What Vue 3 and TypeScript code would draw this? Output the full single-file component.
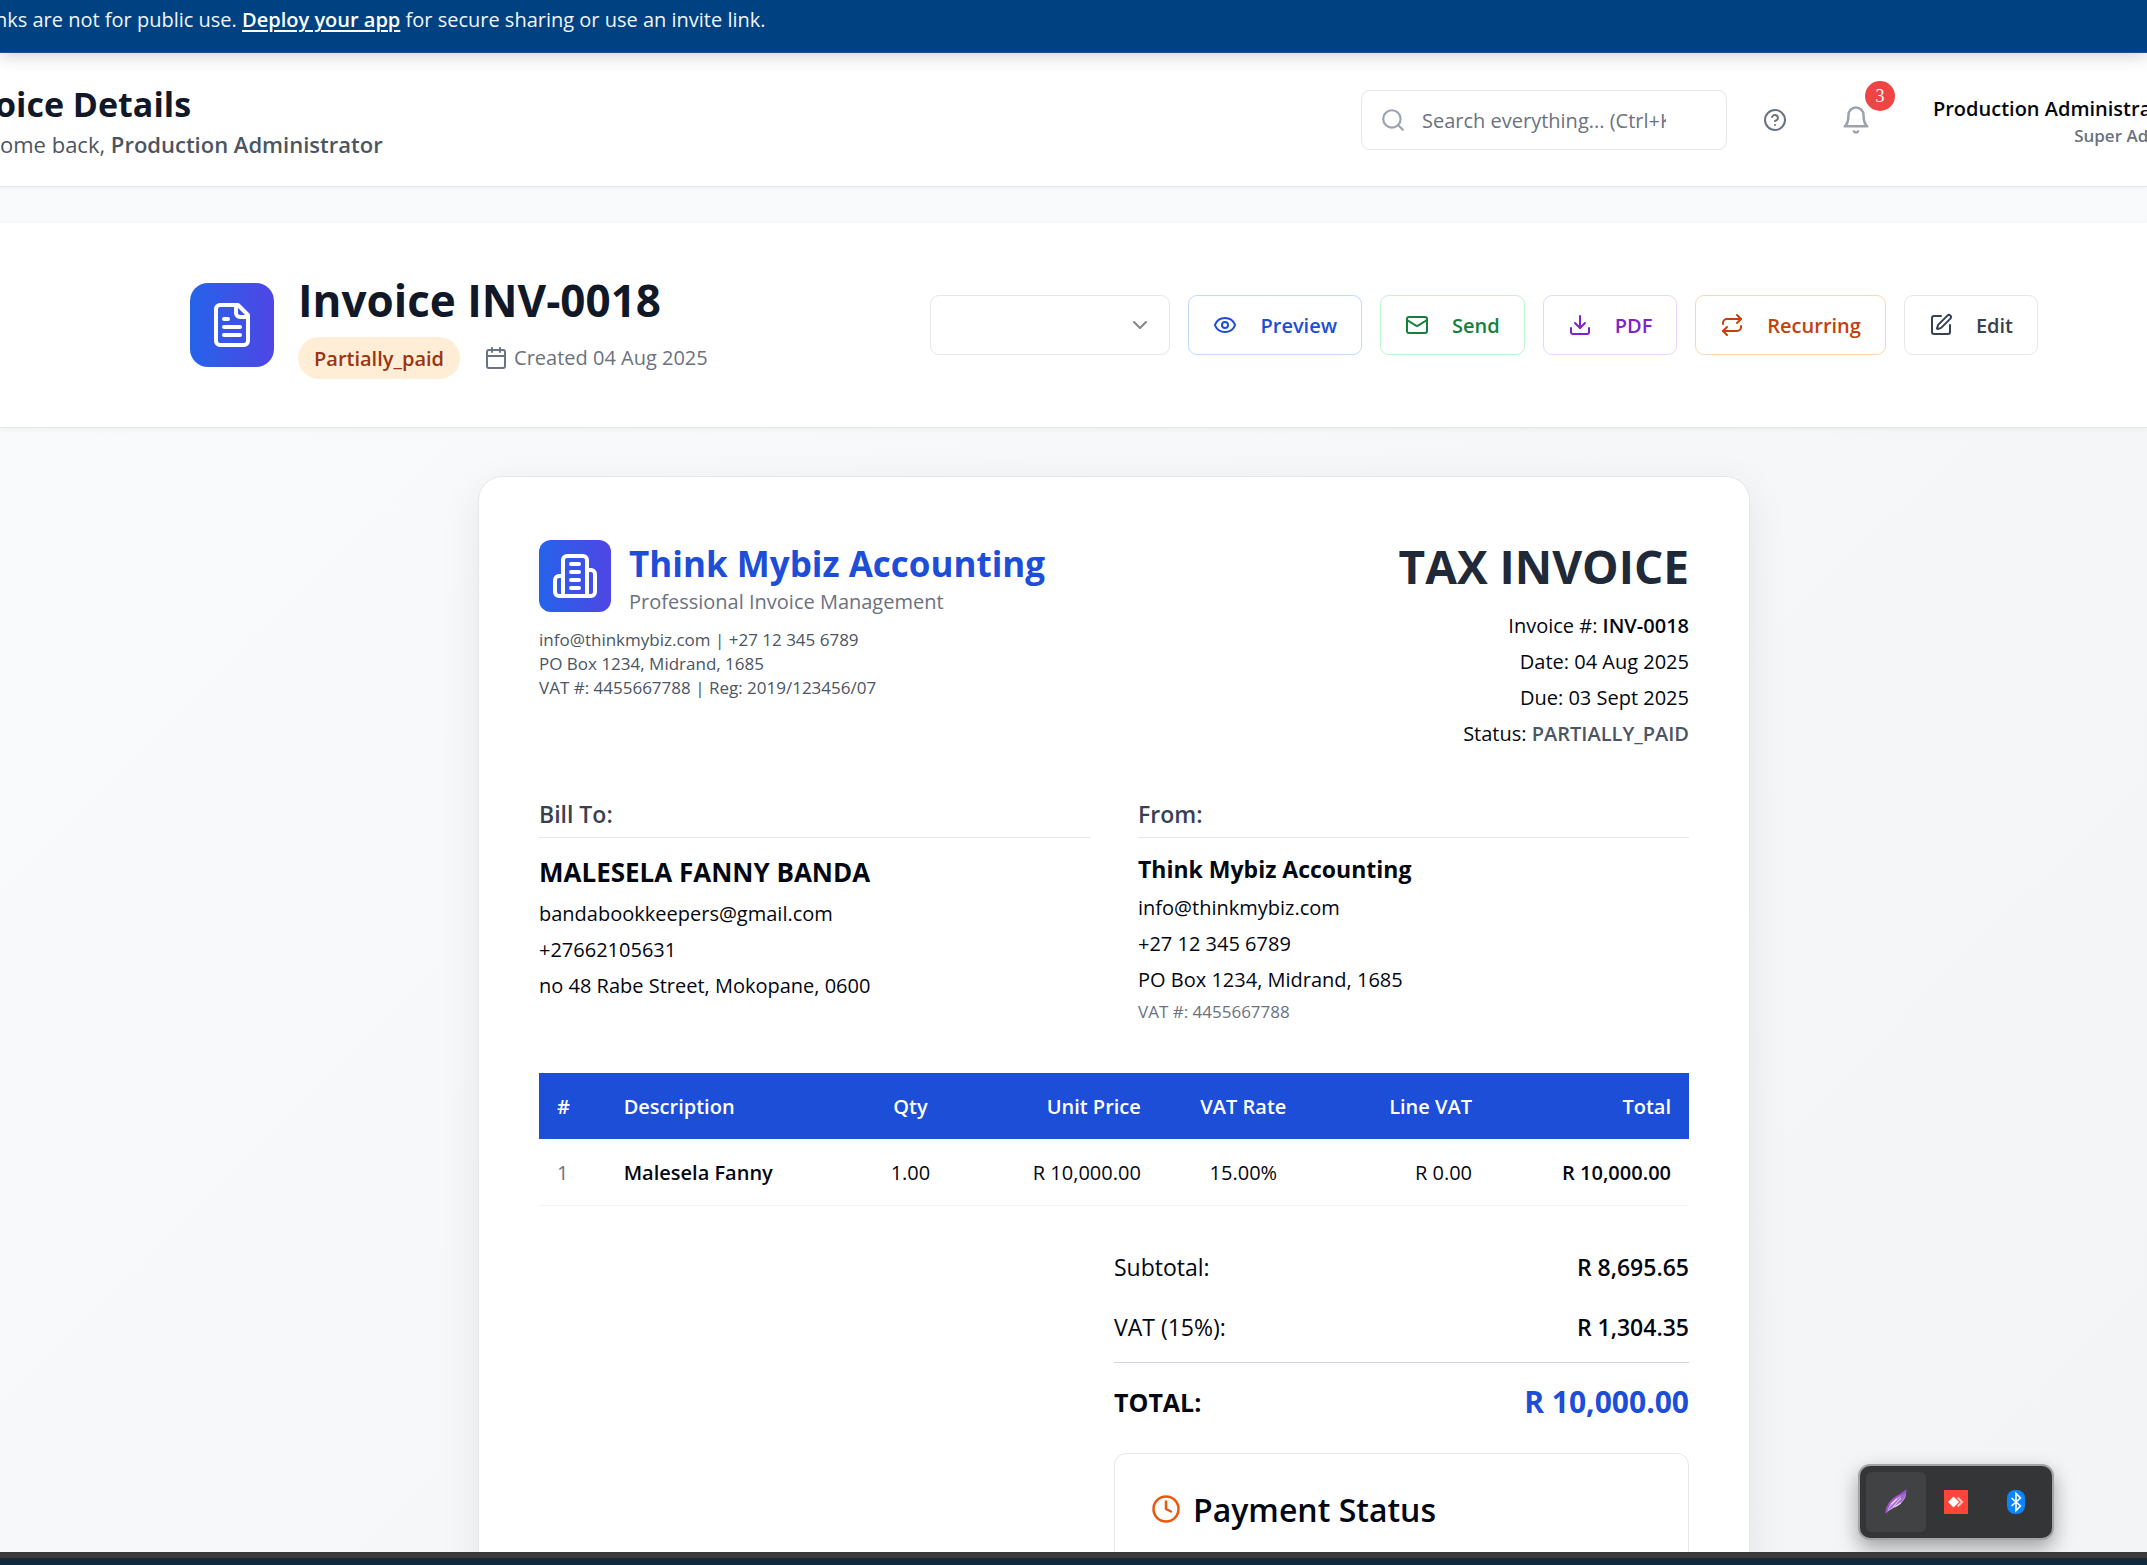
<script setup lang="ts">
interface Action {
  label: string
  tone: string
  paths: string[]
}

interface LineItem {
  id: number
  description: string
  qty: string
  unitPrice: string
  vatRate: string
  lineVat: string
  total: string
}

const actions: Action[] = [
  {
    label: 'Preview',
    tone: 'blue',
    paths: [
      'M2.06 12.35a1 1 0 0 1 0-.7 10.75 10.75 0 0 1 19.88 0 1 1 0 0 1 0 .7 10.75 10.75 0 0 1-19.88 0',
      'M15 12a3 3 0 1 1-6 0 3 3 0 0 1 6 0Z',
    ],
  },
  {
    label: 'Send',
    tone: 'green',
    paths: [
      'M4 4h16a2 2 0 0 1 2 2v12a2 2 0 0 1-2 2H4a2 2 0 0 1-2-2V6a2 2 0 0 1 2-2Z',
      'm22 7-8.97 5.7a1.94 1.94 0 0 1-2.06 0L2 7',
    ],
  },
  {
    label: 'PDF',
    tone: 'purple',
    paths: ['M21 15v4a2 2 0 0 1-2 2H5a2 2 0 0 1-2-2v-4', 'm7 10 5 5 5-5', 'M12 15V3'],
  },
  {
    label: 'Recurring',
    tone: 'orange',
    paths: ['m17 2 4 4-4 4', 'M3 11v-1a4 4 0 0 1 4-4h14', 'm7 22-4-4 4-4', 'M21 13v1a4 4 0 0 1-4 4H3'],
  },
  {
    label: 'Edit',
    tone: 'gray',
    paths: [
      'M12 3H5a2 2 0 0 0-2 2v14a2 2 0 0 0 2 2h14a2 2 0 0 0 2-2v-7',
      'M18.38 2.62a1 1 0 0 1 3 3l-9.01 9.01a2 2 0 0 1-.85.51l-2.87.84a.5.5 0 0 1-.62-.62l.84-2.87a2 2 0 0 1 .5-.85z',
    ],
  },
]

const items: LineItem[] = [
  {
    id: 1,
    description: 'Malesela Fanny',
    qty: '1.00',
    unitPrice: 'R 10,000.00',
    vatRate: '15.00%',
    lineVat: 'R 0.00',
    total: 'R 10,000.00',
  },
]
</script>

<template>
  <div class="page">
    <div class="banner">
      <p>nks are not for public use. <a href="#deploy">Deploy your app</a> for secure sharing or use an invite link.</p>
    </div>

    <header class="topbar">
      <div class="heading">
        <h1>oice Details</h1>
        <p>ome back, <strong>Production Administrator</strong></p>
      </div>
      <div class="tools">
        <label class="search">
          <svg class="icon" viewBox="0 0 24 24" aria-hidden="true"><circle cx="11" cy="11" r="8" /><path d="m21 21-4.3-4.3" /></svg>
          <input type="text" placeholder="Search everything... (Ctrl+K)" aria-label="Search everything" />
        </label>
        <button type="button" class="tool help" aria-label="Help">
          <svg class="icon" viewBox="0 0 24 24"><circle cx="12" cy="12" r="10" /><path d="M9.09 9a3 3 0 0 1 5.83 1c0 2-3 3-3 3" /><path d="M12 17h.01" /></svg>
        </button>
        <button type="button" class="tool bell" aria-label="Notifications">
          <svg class="icon" viewBox="0 0 24 24"><path d="M6 8a6 6 0 0 1 12 0c0 7 3 9 3 9H3s3-2 3-9" /><path d="M10.3 21a1.94 1.94 0 0 0 3.4 0" /></svg>
          <span class="count">3</span>
        </button>
        <div class="user">
          <p class="user-name">Production Administrator</p>
          <p class="user-role">Super Admin</p>
        </div>
      </div>
    </header>

    <section class="titlebar">
      <div class="title-left">
        <span class="title-icon">
          <svg class="icon" viewBox="0 0 24 24" aria-hidden="true"><path d="M15 2H6a2 2 0 0 0-2 2v16a2 2 0 0 0 2 2h12a2 2 0 0 0 2-2V7Z" /><path d="M14 2v4a2 2 0 0 0 2 2h4" /><path d="M10 9H8" /><path d="M16 13H8" /><path d="M16 17H8" /></svg>
        </span>
        <div>
          <h2>Invoice INV-0018</h2>
          <div class="meta">
            <span class="status">Partially_paid</span>
            <span class="created">
              <svg class="icon" viewBox="0 0 24 24" aria-hidden="true"><path d="M8 2v4" /><path d="M16 2v4" /><rect x="3" y="4" width="18" height="18" rx="2" /><path d="M3 10h18" /></svg>
              Created 04 Aug 2025
            </span>
          </div>
        </div>
      </div>
      <div class="actions">
        <div class="picker">
          <select aria-label="Invoice status"><option></option></select>
          <svg class="icon" viewBox="0 0 24 24" aria-hidden="true"><path d="m6 9 6 6 6-6" /></svg>
        </div>
        <button v-for="a in actions" :key="a.label" type="button" class="action" :class="a.tone">
          <svg class="icon" viewBox="0 0 24 24" aria-hidden="true"><path v-for="p in a.paths" :key="p" :d="p" /></svg>
          <span>{{ a.label }}</span>
        </button>
      </div>
    </section>

    <main>
      <article class="invoice">
        <div class="invoice-head">
          <div>
            <div class="brand">
              <span class="brand-icon">
                <svg class="icon" viewBox="0 0 24 24" aria-hidden="true"><path d="M6 22V4a2 2 0 0 1 2-2h8a2 2 0 0 1 2 2v18Z" /><path d="M6 12H4a2 2 0 0 0-2 2v6a2 2 0 0 0 2 2h2" /><path d="M18 9h2a2 2 0 0 1 2 2v9a2 2 0 0 1-2 2h-2" /><path d="M10 6h4" /><path d="M10 10h4" /><path d="M10 14h4" /><path d="M10 18h4" /></svg>
              </span>
              <div>
                <h3>Think Mybiz Accounting</h3>
                <p>Professional Invoice Management</p>
              </div>
            </div>
            <div class="contact">
              <p>info@thinkmybiz.com | +27 12 345 6789</p>
              <p>PO Box 1234, Midrand, 1685</p>
              <p>VAT #: 4455667788 | Reg: 2019/123456/07</p>
            </div>
          </div>
          <div class="facts">
            <h3>TAX INVOICE</h3>
            <p>Invoice #: <strong>INV-0018</strong></p>
            <p>Date: 04 Aug 2025</p>
            <p>Due: 03 Sept 2025</p>
            <p>Status: <strong class="muted">PARTIALLY_PAID</strong></p>
          </div>
        </div>

        <div class="parties">
          <div class="party">
            <h4>Bill To:</h4>
            <p class="client">MALESELA FANNY BANDA</p>
            <p>bandabookkeepers@gmail.com</p>
            <p>+27662105631</p>
            <p>no 48 Rabe Street, Mokopane, 0600</p>
          </div>
          <div class="party">
            <h4>From:</h4>
            <p class="company">Think Mybiz Accounting</p>
            <p>info@thinkmybiz.com</p>
            <p>+27 12 345 6789</p>
            <p>PO Box 1234, Midrand, 1685</p>
            <p class="vat">VAT #: 4455667788</p>
          </div>
        </div>

        <table>
          <colgroup>
            <col class="c-num" /><col class="c-desc" /><col class="c-qty" /><col class="c-unit" /><col class="c-rate" /><col class="c-vat" /><col />
          </colgroup>
          <thead>
            <tr>
              <th>#</th>
              <th>Description</th>
              <th class="center">Qty</th>
              <th class="right">Unit Price</th>
              <th class="center">VAT Rate</th>
              <th class="right">Line VAT</th>
              <th class="right">Total</th>
            </tr>
          </thead>
          <tbody>
            <tr v-for="i in items" :key="i.id">
              <td class="index">{{ i.id }}</td>
              <td class="strong">{{ i.description }}</td>
              <td class="center">{{ i.qty }}</td>
              <td class="right">{{ i.unitPrice }}</td>
              <td class="center">{{ i.vatRate }}</td>
              <td class="right">{{ i.lineVat }}</td>
              <td class="right strong">{{ i.total }}</td>
            </tr>
          </tbody>
        </table>

        <div class="totals">
          <div class="sum"><span>Subtotal:</span><strong>R 8,695.65</strong></div>
          <div class="sum"><span>VAT (15%):</span><strong>R 1,304.35</strong></div>
          <div class="grand"><span>TOTAL:</span><strong>R 10,000.00</strong></div>
          <section class="payment">
            <h3>
              <svg class="icon" viewBox="0 0 24 24" aria-hidden="true"><circle cx="12" cy="12" r="10" /><path d="M12 6v6l4 2" /></svg>
              <span>Payment Status</span>
            </h3>
          </section>
        </div>
      </article>
    </main>

    <div class="tray">
      <button type="button" class="tray-item active" aria-label="Feather">
        <svg viewBox="0 0 24 24">
          <path d="M2 23C2 18 4 13 9 9c4-3 9-4 13-9 .500 6-1 9-4 12-4 5-11 6-16 11Z" fill="#cdaee8" />
          <path d="M22 0c-2 4-7 5-11 8C6 12 3 17 2 23" fill="none" stroke="#a04fd0" stroke-width="2" />
          <path d="M22 0c1 5-2 9-5 12L4 20C8 14 16 8 22 0Z" fill="#8a3db8" opacity=".6" />
          <path d="m9 17 8-9M7 14l6-5M11 17l6-4" fill="none" stroke="#ece2f6" stroke-width="1" />
        </svg>
      </button>
      <button type="button" class="tray-item" aria-label="Remote desktop">
        <svg viewBox="0 0 24 24"><path d="M0 0h24v24H0z" fill="#ff443a" /><path d="m9.500 6.500 5.500 5.500-5.500 5.500L4 12Z" fill="#fff" /><path d="m13.500 7.500 4.500 4.500-4.500 4.500" fill="none" stroke="#ffc4c0" stroke-width="2.200" /></svg>
      </button>
      <button type="button" class="tray-item" aria-label="Bluetooth">
        <svg viewBox="0 0 24 24"><rect x="3" width="18" height="24" rx="8" fill="#0a84ff" /><path d="m7.500 8 9 8-4.500 4.500v-17L16.500 8l-9 8" fill="none" stroke="#fff" stroke-width="1.600" /></svg>
      </button>
    </div>
    <div class="taskbar"></div>
  </div>
</template>

<style>
body {
  margin: 0;
}
</style>

<style scoped>
* {
  box-sizing: border-box;
}

.page {
  position: relative;
  height: 100vh;
  overflow: hidden;
  background: #f8fafc;
  color: #030712;
  font-family: "Open Sans", "Noto Sans", sans-serif;
  font-size: 20px;
  line-height: 36px;
}

h1, h2, h3, h4, p {
  margin: 0;
}

strong {
  font-weight: 600;
}

button, input, select {
  font: inherit;
}

.icon {
  flex: none;
  width: 24px;
  height: 24px;
  fill: none;
  stroke: currentColor;
  stroke-width: 2;
  stroke-linecap: round;
  stroke-linejoin: round;
}

.banner {
  position: relative;
  z-index: 1;
  height: 53px;
  padding-top: 2px;
  background: #004182;
  border-bottom: 1px solid #1d4f8f;
  box-shadow: 0 3px 16px rgba(0, 0, 0, 0.18);
  color: #f1f5f9;
  white-space: nowrap;
}

.banner p,
h1 {
  margin-left: -5px;
}

.banner a {
  color: #fff;
  font-weight: 600;
  text-underline-offset: 3px;
}

.topbar {
  display: flex;
  align-items: center;
  justify-content: space-between;
  height: 134px;
  background: #fff;
  border-bottom: 1px solid #e5e7eb;
  box-shadow: 0 1px 4px rgba(0, 0, 0, 0.06);
  white-space: nowrap;
}

.heading {
  padding-top: 2px;
}

h1 {
  color: #111827;
  font-size: 34px;
  line-height: 48px;
}

.heading p {
  color: #4b5563;
  font-size: 22px;
  line-height: 33px;
}

.tools {
  display: flex;
  align-items: center;
  gap: 18px;
  margin-right: -33px;
}

.search {
  display: flex;
  align-items: center;
  gap: 16px;
  width: 366px;
  height: 60px;
  padding: 0 60px 0 18px;
  border: 1px solid #e5e7eb;
  border-radius: 9px;
  color: #9ca3af;
}

.search .icon {
  width: 26px;
  height: 26px;
}

.search input {
  flex: 1;
  min-width: 0;
  padding: 2px 0 0;
  border: 0;
  outline: 0;
  background: none;
}

.search input::placeholder {
  color: #6b7280;
  opacity: 1;
}

.tool {
  position: relative;
  display: flex;
  align-items: center;
  justify-content: center;
  width: 60px;
  height: 60px;
  padding: 0;
  border: 0;
  background: none;
  color: #6b7280;
}

.bell {
  width: 66px;
  color: #9ca3af;
}

.bell .icon {
  width: 30px;
  height: 30px;
}

.count {
  position: absolute;
  top: -9px;
  right: -6px;
  width: 30px;
  height: 30px;
  border-radius: 50%;
  background: #ef4444;
  color: #fff;
  font: 18px/30px "Liberation Serif", serif;
}

.user {
  flex: none;
  width: 273px;
  padding-top: 2px;
  text-align: right;
}

.user-name {
  font-weight: 600;
  line-height: 30px;
}

.user-role {
  color: #6b7280;
  font-size: 17px;
  font-weight: 600;
  line-height: 24px;
}

.titlebar {
  position: relative;
  display: flex;
  align-items: center;
  justify-content: space-between;
  height: 205px;
  margin-top: 36px;
  padding: 0 109px 0 190px;
  background: #fff;
  border-bottom: 1px solid #e5e7eb;
  box-shadow: 0 1px 6px rgba(0, 0, 0, 0.06);
}

.title-left {
  display: flex;
  align-items: center;
  gap: 24px;
}

.title-icon,
.brand-icon {
  display: flex;
  flex: none;
  align-items: center;
  justify-content: center;
  background: linear-gradient(90deg, #2563eb, #4f46e5);
  color: #fff;
}

.title-icon {
  width: 84px;
  height: 84px;
  border-radius: 18px;
}

.brand-icon {
  width: 72px;
  height: 72px;
  border-radius: 12px;
}

.title-icon .icon,
.brand-icon .icon {
  width: 48px;
  height: 48px;
}

h2 {
  color: #111827;
  font-size: 44px;
  line-height: 58px;
}

.meta {
  display: flex;
  align-items: center;
  gap: 24px;
  margin-top: 8px;
}

.status {
  padding: 4px 16px 2px;
  border-radius: 21px;
  background: #ffedd5;
  color: #9a3412;
  font-weight: 600;
}

.created {
  display: flex;
  align-items: center;
  gap: 6px;
  color: #6b7280;
}

.actions {
  display: flex;
  gap: 18px;
}

.picker {
  position: relative;
  width: 240px;
  color: #858585;
}

.picker select {
  appearance: none;
  width: 100%;
  height: 60px;
  border: 1px solid #e5e7eb;
  border-radius: 9px;
  background: #fff;
}

.picker .icon {
  position: absolute;
  top: 18px;
  right: 18px;
  pointer-events: none;
}

.action {
  display: flex;
  align-items: center;
  gap: 23px;
  height: 60px;
  padding: 0 24px;
  border: 1px solid;
  border-radius: 9px;
  background: #fff;
  font-weight: 600;
}

.action span {
  padding-top: 2px;
}

.blue {
  border-color: #bfdbfe;
  color: #1d4ed8;
}

.green {
  border-color: #bbf7d0;
  color: #15803d;
}

.purple {
  border-color: #e9d5ff;
  color: #7e22ce;
}

.orange {
  border-color: #fed7aa;
  color: #c2410c;
}

.gray {
  border-color: #e5e7eb;
  color: #374151;
}

main {
  min-height: 1137px;
  padding: 48px 0 0 81px;
  background: linear-gradient(135deg, #f9fafb, #f3f4f6);
}

.invoice {
  width: 100%;
  max-width: 1272px;
  min-height: 1240px;
  margin: 0 auto;
  padding: 63px 60px;
  border: 1px solid #e5e7eb;
  border-radius: 24px;
  background: #fff;
  box-shadow: 0 12px 40px rgba(0, 0, 0, 0.08);
}

.invoice-head {
  display: flex;
  justify-content: space-between;
}

.brand {
  display: flex;
  gap: 18px;
}

.brand h3 {
  color: #1d4ed8;
  font-size: 35px;
  line-height: 47px;
}

.brand p {
  color: #6b7280;
  line-height: 30px;
}

.contact {
  margin-top: 11px;
  color: #4b5563;
  font-size: 17px;
  line-height: 24px;
}

.facts {
  text-align: right;
}

.facts h3 {
  margin-bottom: 16px;
  color: #1f2937;
  font-size: 46px;
  line-height: 52px;
}

.muted {
  color: #4b5563;
}

.parties {
  display: grid;
  grid-template-columns: 1fr 1fr;
  gap: 48px;
  margin-top: 44px;
}

.party h4 {
  margin-bottom: 13px;
  padding-bottom: 5px;
  border-bottom: 1px solid #e5e7eb;
  color: #374151;
  font-size: 23px;
  font-weight: 600;
}

.client {
  margin-bottom: 3px;
  font-size: 26px;
  font-weight: 700;
  line-height: 42px;
}

.company {
  margin-bottom: 3px;
  font-size: 23px;
  font-weight: 700;
}

.vat {
  color: #6b7280;
  font-size: 17px;
  line-height: 28px;
}

table {
  width: 100%;
  margin-top: 47px;
  border-collapse: collapse;
  table-layout: fixed;
}

.c-num { width: 5.8%; }
.c-desc { width: 20%; }
.c-qty { width: 13%; }
.c-unit { width: 15.1%; }
.c-rate { width: 14.7%; }
.c-vat { width: 14.1%; }

th, td {
  height: 66px;
  padding: 2px 18px 0;
  text-align: left;
  white-space: nowrap;
}

th {
  background: #1d4ed8;
  color: #fff;
  font-weight: 600;
}

td {
  border-bottom: 1px solid #f3f4f6;
}

.index {
  color: #6b7280;
}

.strong {
  font-weight: 600;
}

.center {
  text-align: center;
}

.right {
  text-align: right;
}

.totals {
  width: 50%;
  margin: 31px 0 0 auto;
}

.sum,
.grand {
  display: flex;
  align-items: center;
  justify-content: space-between;
}

.sum {
  height: 60px;
  font-size: 23px;
}

.grand {
  height: 80px;
  margin: 5px 0 11px;
  border-top: 1px solid #d1d5db;
  font-size: 25px;
  font-weight: 700;
}

.grand strong {
  color: #1d4ed8;
  font-size: 30px;
  font-weight: 700;
}

.payment {
  height: 240px;
  padding: 30px 36px;
  border: 1px solid #e5e7eb;
  border-radius: 12px;
}

.payment h3 {
  display: flex;
  align-items: center;
  gap: 12px;
  font-size: 32px;
  font-weight: 600;
  line-height: 48px;
}

.payment span {
  padding-top: 2px;
}

.payment .icon {
  width: 30px;
  height: 30px;
  color: #ea580c;
}

.tray {
  position: absolute;
  right: 93px;
  bottom: 25px;
  display: flex;
  padding: 6px;
  border: 2px solid #a3a4a6;
  border-radius: 12px;
  background: #343537;
  box-shadow: 0 8px 20px rgba(0, 0, 0, 0.35);
}

.tray-item {
  display: flex;
  align-items: center;
  justify-content: center;
  width: 60px;
  height: 60px;
  padding: 0;
  border: 0;
  border-radius: 6px;
  background: none;
}

.tray-item.active {
  background: #414244;
}

.tray-item svg {
  width: 24px;
  height: 24px;
}

.taskbar {
  position: absolute;
  right: 0;
  bottom: 0;
  left: 0;
  height: 13px;
  border-top: 6px solid #3a3a3a;
  background: #12283b;
}
</style>
